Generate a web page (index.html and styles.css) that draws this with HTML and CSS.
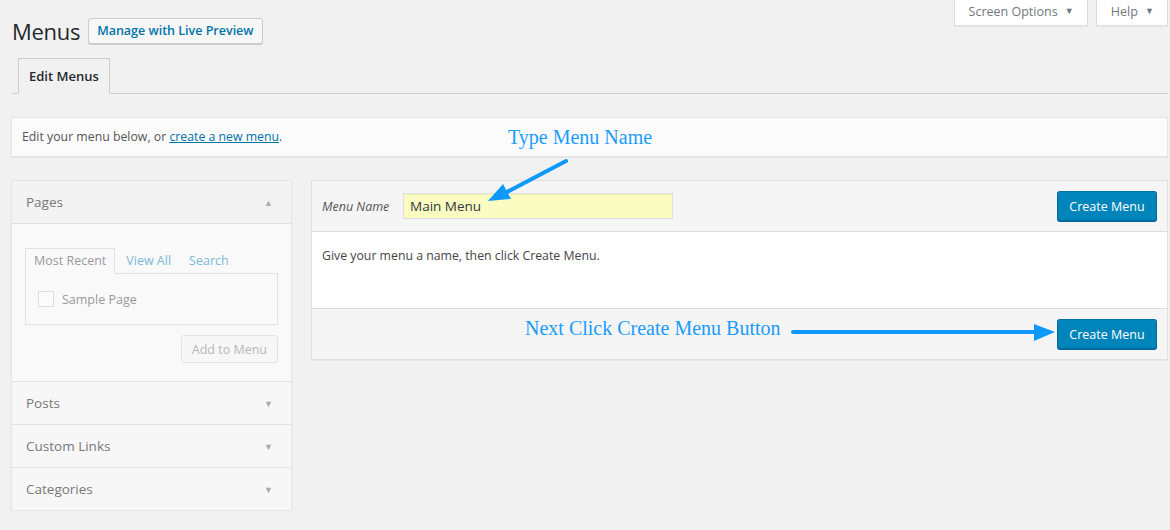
FILE: index.html
```html
<!DOCTYPE html>
<html lang="en">
<head>
    <meta charset="UTF-8">
    <title>Menus</title>
    <link rel="stylesheet" href="styles.css">
</head>
<body>
    <div class="wrap">
        <div class="screen-meta-links">
            <div class="meta-tab">Screen Options <span class="caret">&#9660;</span></div>
            <div class="meta-tab">Help <span class="caret">&#9660;</span></div>
        </div>
        <div class="page-head">
            <h1>Menus</h1>
            <a class="btn-secondary">Manage with Live Preview</a>
        </div>
        <div class="nav-tabs">
            <div class="nav-tab active">Edit Menus</div>
        </div>
        <div class="manage-menus">
            Edit your menu below, or <a href="#">create a new menu</a>.
        </div>

        <div class="menu-layout">
            <div class="accordion">
                <div class="section open">
                    <div class="section-title">Pages <span class="arrow">&#9650;</span></div>
                    <div class="section-body">
                        <div class="sub-tabs">
                            <span class="sub-tab active">Most Recent</span>
                            <span class="sub-tab">View All</span>
                            <span class="sub-tab">Search</span>
                        </div>
                        <div class="tab-panel">
                            <label class="check"><span class="box"></span>Sample Page</label>
                        </div>
                        <div class="add-row"><button class="btn-disabled">Add to Menu</button></div>
                    </div>
                </div>
                <div class="section">
                    <div class="section-title">Posts <span class="arrow">&#9660;</span></div>
                </div>
                <div class="section">
                    <div class="section-title">Custom Links <span class="arrow">&#9660;</span></div>
                </div>
                <div class="section">
                    <div class="section-title">Categories <span class="arrow">&#9660;</span></div>
                </div>
            </div>

            <div class="menu-edit">
                <div class="menu-header">
                    <label class="name-label">Menu Name</label>
                    <input class="name-input" type="text" value="Main Menu">
                    <button class="btn-primary">Create Menu</button>
                </div>
                <div class="menu-body">Give your menu a name, then click Create Menu.</div>
                <div class="menu-footer">
                    <button class="btn-primary">Create Menu</button>
                </div>
            </div>
        </div>
    </div>

    <div class="notes">
        <div class="note note-top">Type Menu Name</div>
        <div class="note note-bottom">Next Click Create Menu Button</div>
        <svg class="arrows" width="1170" height="530" viewBox="0 0 1170 530">
            <line x1="566" y1="161" x2="505" y2="193" stroke="#0f99fb" stroke-width="4" stroke-linecap="round"/>
            <polygon points="488,201 503,184 511,199" fill="#0f99fb"/>
            <line x1="793" y1="332" x2="1040" y2="332" stroke="#0f99fb" stroke-width="4" stroke-linecap="round"/>
            <polygon points="1034,324 1055,332 1034,341" fill="#0f99fb"/>
        </svg>
    </div>
</body>
</html>
```

FILE: styles.css
```css
body {
    margin: 0;
    background: #f1f1f1;
    font-family: "Open Sans", "Noto Sans", sans-serif;
    font-size: 13px;
    color: #444;
}
.wrap {
    padding: 0 2px 0 11px;
}
.screen-meta-links {
    float: right;
    display: flex;
    gap: 8px;
}
.meta-tab {
    height: 25px;
    line-height: 24px;
    padding: 0 13px 0 14px;
    background: #fff;
    border: 1px solid #ddd;
    border-top: none;
    box-shadow: 0 1px 1px rgba(0,0,0,.04);
    color: #72777c;
    font-size: 12.5px;
}
.meta-tab .caret {
    font-size: 9px;
    margin-left: 4px;
    position: relative;
    top: -2px;
    color: #72777c;
}
.page-head {
    display: flex;
    align-items: center;
    padding-top: 18px;
}
.page-head h1 {
    margin: 0 0 0 1px;
    font-size: 22px;
    font-weight: 400;
    letter-spacing: -0.3px;
    color: #23282d;
    line-height: 26px;
}
.btn-secondary {
    margin-left: 8px;
    height: 24px;
    line-height: 24px;
    padding: 0 8px;
    border: 1px solid #ccc;
    border-radius: 3px;
    background: #f7f7f7;
    box-shadow: 0 1px 0 #ccc;
    color: #0073aa;
    font-weight: 600;
    font-size: 12.5px;
}
.nav-tabs {
    margin-top: 14px;
    border-bottom: 1px solid #ccc;
    padding-left: 6px;
    margin-left: 1px;
    display: flex;
}
.nav-tab {
    padding: 5px 10px;
    line-height: 24px;
    font-size: 13px;
    font-weight: 600;
    color: #23282d;
    border: 1px solid #ccc;
    border-bottom: 1px solid #f1f1f1;
    margin-bottom: -1px;
    background: #f1f1f1;
}
.manage-menus {
    margin-top: 23px;
    padding: 10px;
    line-height: 18px;
    background: #fbfbfb;
    border: 1px solid #e5e5e5;
    box-shadow: 0 1px 1px rgba(0,0,0,.04);
    color: #555;
    font-size: 12.3px;
}
.manage-menus a {
    color: #0073aa;
}
.menu-layout {
    display: flex;
    gap: 19px;
    margin-top: 23px;
    align-items: flex-start;
}
.accordion {
    width: 279px;
    flex: none;
    border: 1px solid #e5e5e5;
    box-shadow: 0 1px 1px rgba(0,0,0,.06);
    background: #f9f9f9;
}
.section + .section {
    border-top: 1px solid #e1e1e1;
}
.section-title {
    display: flex;
    justify-content: space-between;
    align-items: center;
    height: 42px;
    padding: 0 14px;
    color: #777;
    font-size: 13.5px;
    background: #f7f7f7;
}
.section.open .section-title {
    background: #f3f3f3;
    border-bottom: 1px solid #e1e1e1;
}
.section-title .arrow {
    font-size: 9px;
    color: #aaa;
    margin-right: 4px;
}
.section-body {
    padding: 24px 13px 18px 13px;
    background: #f9f9f9;
}
.sub-tabs {
    display: flex;
    align-items: flex-end;
}
.sub-tab {
    padding: 0 9px;
    line-height: 24px;
    color: #7ab8d8;
    font-size: 12.5px;
}
.sub-tab.active {
    color: #999;
    border: 1px solid #e1e1e1;
    border-bottom: 1px solid #f9f9f9;
    margin-bottom: -1px;
    padding: 0 8px;
    margin-right: 2px;
}
.tab-panel {
    border: 1px solid #e1e1e1;
    height: 50px;
    padding: 0 12px;
    display: flex;
    align-items: center;
}
.check {
    display: flex;
    align-items: center;
    color: #999;
    font-size: 12.5px;
}
.check .box {
    width: 14px;
    height: 14px;
    border: 1px solid #ddd;
    background: #fbfbfb;
    margin-right: 8px;
}
.add-row {
    display: flex;
    justify-content: flex-end;
    margin-top: 10px;
}
.btn-disabled {
    font-family: inherit;
    font-size: 12.5px;
    height: 28px;
    padding: 0 10px;
    border: 1px solid #e3e3e3;
    border-radius: 3px;
    background: #f7f7f7;
    color: #b5b8bb;
}
.menu-edit {
    flex: 1;
    border: 1px solid #e0e0e0;
    box-shadow: 0 1px 1px rgba(0,0,0,.04);
    background: #fff;
}
.menu-header {
    display: flex;
    align-items: center;
    height: 50px;
    padding: 0 10px;
    background: #f5f5f5;
    border-bottom: 1px solid #dcdcdc;
}
.name-label {
    font-style: italic;
    color: #555;
    font-size: 12.5px;
    width: 81px;
}
.name-input {
    width: 256px;
    height: 24px;
    padding: 0 6px;
    border: 1px solid #ddd;
    background: #fafcc2;
    font-family: inherit;
    font-size: 13.5px;
    color: #32373c;
    box-shadow: inset 0 1px 2px rgba(0,0,0,.04);
}
.menu-header .btn-primary {
    margin-left: auto;
}
.btn-primary {
    font-family: inherit;
    font-size: 12.5px;
    height: 30px;
    width: 100px;
    padding: 0;
    border: 1px solid #0073aa;
    border-color: #0073aa #006799 #006799;
    border-radius: 3px;
    background: #0085ba;
    box-shadow: 0 1px 0 #006799;
    color: #fff;
}
.menu-body {
    height: 76px;
    padding: 15px 10px 0 10px;
    box-sizing: border-box;
    line-height: 18px;
    color: #444;
    font-size: 12.3px;
}
.menu-footer {
    display: flex;
    justify-content: flex-end;
    align-items: center;
    height: 50px;
    padding: 0 10px;
    background: #f5f5f5;
    border-top: 1px solid #dcdcdc;
}
.notes {
    position: absolute;
    left: 0;
    top: 0;
    width: 1170px;
    height: 530px;
    pointer-events: none;
}
.arrows {
    position: absolute;
    left: 0;
    top: 0;
}
.note {
    position: absolute;
    font-family: "Liberation Serif", serif;
    font-size: 20px;
    line-height: 20px;
    color: #1a9cfd;
    white-space: nowrap;
}
.note-top {
    left: 508px;
    top: 127px;
}
.note-bottom {
    left: 525px;
    top: 318px;
}
```
